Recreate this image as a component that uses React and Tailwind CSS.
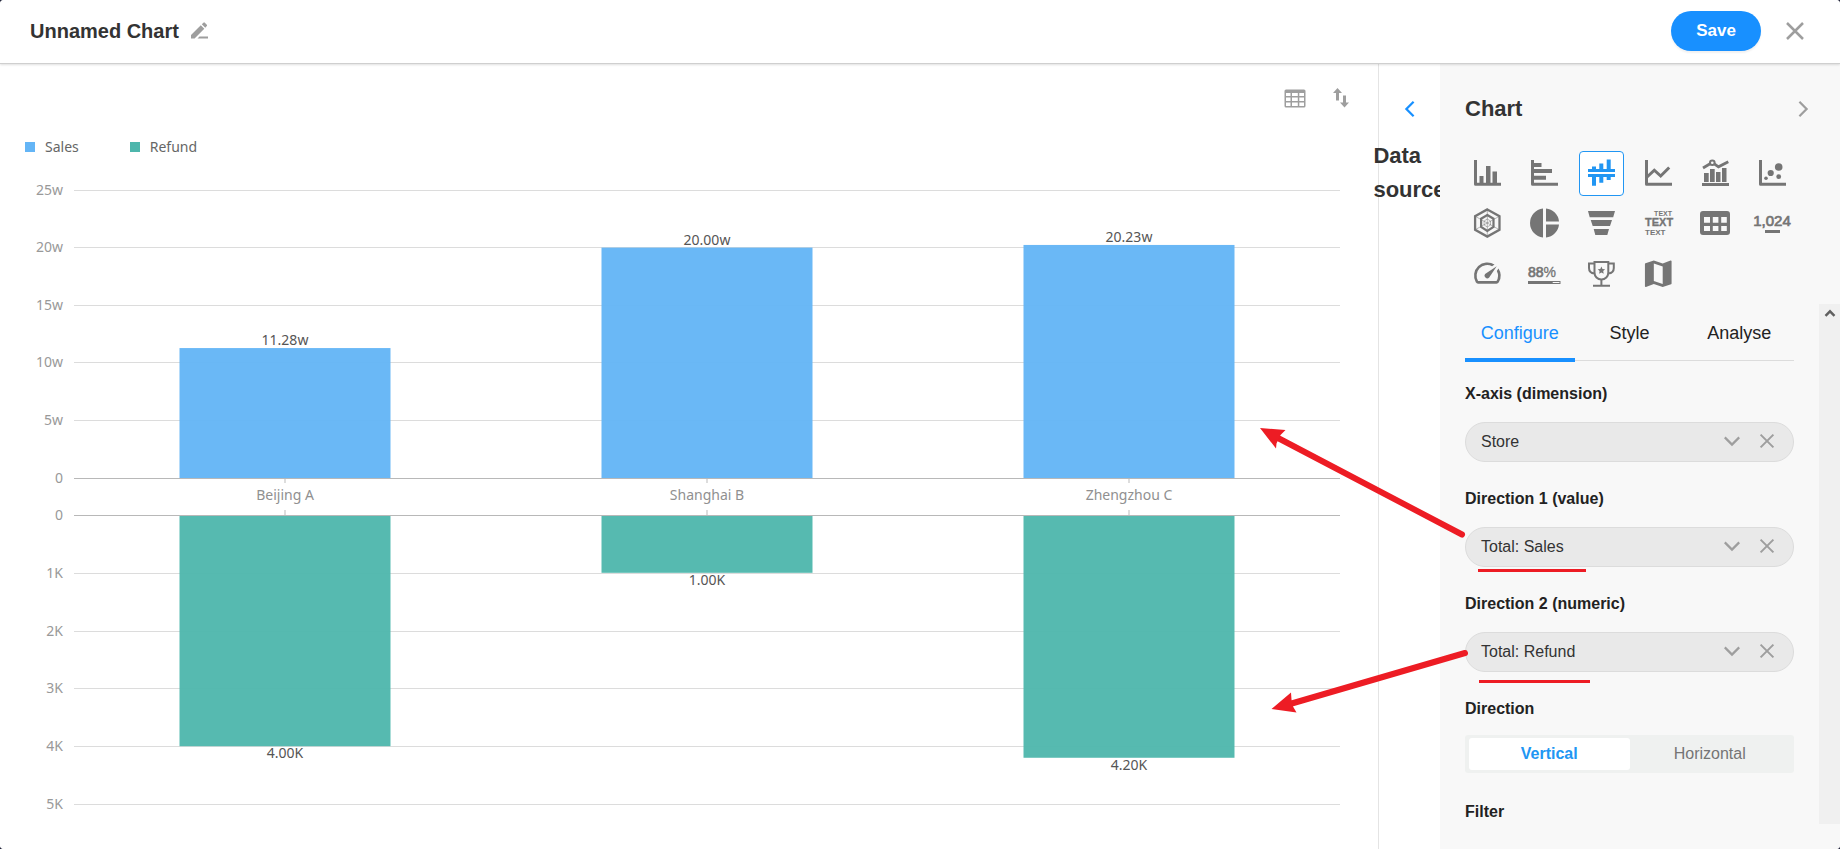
import React, { useState } from 'react';

const categories = [
  { name: 'Beijing A', sales: 11.28, refund: 4.0 },
  { name: 'Shanghai B', sales: 20.0, refund: 1.0 },
  { name: 'Zhengzhou C', sales: 20.23, refund: 4.2 },
];

const chartTypes = [
  {
    id: 'column',
    label: 'Column chart',
    icon: (
      <>
        <path d="M10.5 9v24.2H36" fill="none" stroke="currentColor" strokeWidth="3" strokeLinejoin="round" />
        <path d="M14.5 25h4v9h-4zM21 15h4.5v19H21zM27.5 20.5H32V34h-4.5z" />
      </>
    ),
  },
  {
    id: 'bar',
    label: 'Bar chart',
    icon: (
      <>
        <path d="M10.5 9v24.2H36" fill="none" stroke="currentColor" strokeWidth="3" strokeLinejoin="round" />
        <path d="M11 12h8.5v4H11zM11 18h19v4H11zM11 24.7h13v4H11z" />
      </>
    ),
  },
  {
    id: 'symmetric',
    label: 'Symmetric bar chart',
    icon: (
      <path d="M9 18h27v3H9zM9 23h27v3H9zM13 15.5h4V19h-4zM20.3 12.5h4V19h-4zM27.7 8.5h4V19h-4zM13 25h4v9.7h-4zM20.3 25h4v6.7h-4zM27.7 25h4v4h-4z" />
    ),
  },
  {
    id: 'line',
    label: 'Line chart',
    icon: (
      <g fill="none" stroke="currentColor" strokeWidth="3">
        <path d="M10.5 9v24.2H36" strokeLinejoin="round" />
        <path d="M10.5 26.5l7.8-7.3 6.4 5.8 8.5-8.5" />
      </g>
    ),
  },
  {
    id: 'combo',
    label: 'Dual axes chart',
    icon: (
      <>
        <path d="M9 32h27v3H9zM11 22h4.7v9H11zM17 18h4.7v13H17zM23 21h4.5v10H23zM29 17h4.5v14H29z" />
        <path d="M10 17l7.5-4.5M21.3 12.8l4.2 3L35.3 10.7" fill="none" stroke="currentColor" strokeWidth="2.8" />
        <circle cx="19.3" cy="11.7" r="2.3" fill="none" stroke="currentColor" strokeWidth="2" />
      </>
    ),
  },
  {
    id: 'scatter',
    label: 'Scatter chart',
    icon: (
      <>
        <path d="M10.5 9v24.2H36" fill="none" stroke="currentColor" strokeWidth="3" strokeLinejoin="round" />
        <circle cx="16" cy="27.3" r="1.8" />
        <circle cx="20.7" cy="22" r="3.1" />
        <circle cx="28.7" cy="16" r="3.8" />
        <circle cx="28.7" cy="25.7" r="2.4" />
      </>
    ),
  },
  {
    id: 'radar',
    label: 'Radar chart',
    icon: (
      <g fill="none" stroke="currentColor">
        <path d="M22.3 8.4l12.2 6.8v13.6l-12.2 6.8-12.2-6.8V15.2z" strokeWidth="2.3" />
        <path d="M22.3 14l6.2 3.7v8.2L22.3 30l-6.2-4.1v-8.2z" strokeWidth="2.2" />
        <path d="M10 15.2l24.5 13.6M34.5 15.2L10 28.8M22.3 8v28" strokeWidth="0.5" />
        <path d="M22.3 18l3.2 2v4l-3.2 2-3.2-2v-4z" strokeWidth="0.5" />
      </g>
    ),
  },
  {
    id: 'pie',
    label: 'Pie chart',
    icon: (
      <path d="M21 7.4v29.2a14.7 14.7 0 010-29.2zM24 7.4A14.7 14.7 0 0137 20.4H24zM24 23.4h13a14.7 14.7 0 01-13 13.2z" />
    ),
  },
  {
    id: 'funnel',
    label: 'Funnel chart',
    icon: <path d="M9 10h27l-1.8 6.3H10.7zM11.7 19H33l-2 6H13.7zM14.7 28H30l-1.7 6h-12z" />,
  },
  {
    id: 'wordcloud',
    label: 'Word cloud',
    icon: (
      <g fontFamily="Liberation Sans, sans-serif" fontWeight="700">
        <text x="36" y="15" fontSize="7" textAnchor="end">
          TEXT
        </text>
        <text x="9" y="25" fontSize="11" stroke="currentColor" strokeWidth="0.3">
          TEXT
        </text>
        <text x="9" y="34" fontSize="8">
          TEXT
        </text>
      </g>
    ),
  },
  {
    id: 'pivot',
    label: 'Pivot table',
    icon: (
      <path
        fillRule="evenodd"
        d="M10 10h24a3 3 0 013 3v18a3 3 0 01-3 3H10a3 3 0 01-3-3V13a3 3 0 013-3zM11 16v5.7h6V16zM19.8 16v5.7h5.6V16zM28.2 16v5.7h5.6V16zM11 25v5h6v-5zM19.8 25v5h5.6v-5zM28.2 25v5h5.6v-5z"
      />
    ),
  },
  {
    id: 'number',
    label: 'Number',
    icon: (
      <>
        <text
          x="22"
          y="25"
          fontSize="15"
          textAnchor="middle"
          stroke="currentColor"
          strokeWidth="0.7"
          fontFamily="Liberation Sans, sans-serif"
        >
          1,024
        </text>
        <path d="M15 29h15v3H15z" />
      </>
    ),
  },
  {
    id: 'gauge',
    label: 'Gauge',
    icon: (
      <path
        transform="translate(6.3 6) scale(1.333)"
        d="M20.38 8.57l-1.23 1.85a8 8 0 01-.22 7.58H5.07A8 8 0 0115.58 6.85l1.85-1.23A10 10 0 003.35 19a2 2 0 001.72 1h13.85a2 2 0 001.74-1 10 10 0 00-.27-10.44zM10.59 15.41a2 2 0 002.83 0l5.66-8.49-8.49 5.66a2 2 0 000 2.83z"
      />
    ),
  },
  {
    id: 'progress',
    label: 'Progress',
    icon: (
      <>
        <text
          x="6"
          y="25.5"
          fontSize="14"
          stroke="currentColor"
          strokeWidth="0.7"
          fontFamily="Liberation Sans, sans-serif"
        >
          88
          <tspan strokeWidth="0.3">%</tspan>
        </text>
        <path fillRule="evenodd" d="M6 30h32.5v3H6zM30.7 31v1h6.8v-1z" />
      </>
    ),
  },
  {
    id: 'ranking',
    label: 'Ranking',
    icon: (
      <>
        <g fill="none" stroke="currentColor" strokeWidth="2">
          <path d="M15.5 11h13.8v10.5c0 4-3 7-6.9 7s-6.9-3-6.9-7z" />
          <path d="M15.5 12.5H10v4.5c0 3.2 2 5.2 5.5 5.6M29.3 12.5h5.5v4.5c0 3.2-2 5.2-5.5 5.6" />
          <path d="M22.4 28.5v6M14 34.7h17" />
        </g>
        <path d="M22.4 15.5l1.1 2.5 2.6.3-1.9 1.8.5 2.7-2.3-1.4-2.3 1.4.5-2.7-1.9-1.8 2.6-.3z" />
      </>
    ),
  },
  {
    id: 'map',
    label: 'Map',
    icon: (
      <path
        transform="translate(4.5 5) scale(1.48)"
        d="M20.5 3l-.16.03L15 5.1 9 3 3.36 4.9c-.21.07-.36.25-.36.48V20.5c0 .28.22.5.5.5l.16-.03L9 18.9l6 2.1 5.64-1.9c.21-.07.36-.25.36-.48V3.5c0-.28-.22-.5-.5-.5zM15 19l-6-2.11V5l6 2.11V19z"
      />
    ),
  },
];

const tabs = ['Configure', 'Style', 'Analyse'];

const fields = [
  { label: 'X-axis (dimension)', value: 'Store' },
  { label: 'Direction 1 (value)', value: 'Total: Sales' },
  { label: 'Direction 2 (numeric)', value: 'Total: Refund' },
];

const PLOT = 288;
const TOP = 20; // y of the highest grid line
const ZERO_UP = TOP + PLOT;
const ZERO_DOWN = ZERO_UP + 37;
const PLOT_DOWN = 289;

const CROSS = 'M2 2l16 16M18 2L2 18';

const Stroke = ({ d, size, width = 2 }) => (
  <svg
    width={size}
    height={size}
    viewBox="0 0 20 20"
    fill="none"
    stroke="currentColor"
    strokeWidth={width}
    aria-hidden="true"
  >
    <path d={d} />
  </svg>
);

const Header = () => (
  <header className="relative z-10 flex h-16 shrink-0 items-center justify-between border-b border-[#cfcfcf] bg-white pr-[35px] pb-0.5 pl-[30px] shadow-[0_1px_2px_rgba(0,0,0,0.12)]">
    <div className="flex items-center gap-3">
      <h1 className="text-xl font-bold text-[#333]">Unnamed Chart</h1>
      <button aria-label="Rename chart" className="text-[#9e9e9e]">
        <svg width="18" height="17" viewBox="0 0 18 17" fill="currentColor" aria-hidden="true">
          <path d="M0 16.5v-3.6L9.8 3.2l3.5 3.5-9.7 9.8zM10.8 2.2L12.4.7a1 1 0 011.4 0l2 2a1 1 0 010 1.4l-1.5 1.6zM8.5 14.5H17v2H6.5z" />
        </svg>
      </button>
    </div>
    <div className="flex items-center gap-6">
      <button className="h-10 w-[90px] rounded-full bg-[#1890ff] text-[17px] font-bold text-white shadow-[0_2px_2px_rgba(0,0,0,0.06)]">
        Save
      </button>
      <button aria-label="Close" className="text-[#9e9e9e]">
        <Stroke d={CROSS} size={20} width={2.5} />
      </button>
    </div>
  </header>
);

const GridLine = ({ y, label, axis }) => (
  <g>
    <line x1="0" x2="100%" y1={y} y2={y} stroke={axis ? '#b8b8b8' : '#dcdcdc'} shapeRendering="crispEdges" />
    <text x="-11" y={y} dy="5" textAnchor="end" fill="#999">
      {label}
    </text>
  </g>
);

const BidirectionalChart = () => (
  <div className="pr-[38px] pl-[74px]">
    <svg
      role="img"
      aria-label="Sales and refund by store"
      className="block h-[660px] w-full overflow-visible font-['Noto_Sans',sans-serif] text-sm"
    >
      {[25, 20, 15, 10, 5].map((v) => (
        <GridLine key={v} y={Math.floor(ZERO_UP - (v / 25) * PLOT)} label={`${v}w`} />
      ))}
      {[1, 2, 3, 4, 5].map((v) => (
        <GridLine key={v} y={Math.round(ZERO_DOWN + (v / 5) * PLOT_DOWN)} label={`${v}K`} />
      ))}
      {categories.map((c, i) => {
        const left = ((i + 0.25) / 3) * 100;
        const center = ((i + 0.5) / 3) * 100;
        const up = (c.sales / 25) * PLOT;
        const down = (c.refund / 5) * PLOT_DOWN;
        return (
          <g key={c.name}>
            <rect x={`${left}%`} y={ZERO_UP - up} width={`${50 / 3}%`} height={up} fill="#64b5f6" fillOpacity="0.96" />
            <rect x={`${left}%`} y={ZERO_DOWN} width={`${50 / 3}%`} height={down} fill="#4db6ac" fillOpacity="0.95" />
            <line x1={`${center}%`} x2={`${center}%`} y1={ZERO_UP} y2={ZERO_UP + 5} stroke="#bbb" />
            <line x1={`${center}%`} x2={`${center}%`} y1={ZERO_DOWN - 5} y2={ZERO_DOWN} stroke="#bbb" />
            <text x={`${center}%`} y={ZERO_UP - up - 3} textAnchor="middle" fill="#555">
              {c.sales.toFixed(2)}w
            </text>
            <text x={`${center}%`} y={ZERO_UP + 22} textAnchor="middle" fill="#909090">
              {c.name}
            </text>
            <text x={`${center}%`} y={ZERO_DOWN + down + 12} textAnchor="middle" fill="#555">
              {c.refund.toFixed(2)}K
            </text>
          </g>
        );
      })}
      <GridLine y={ZERO_UP} label="0" axis />
      <GridLine y={ZERO_DOWN} label="0" axis />
    </svg>
  </div>
);

const ChartArea = () => (
  <section className="min-w-0 flex-1 bg-white pt-[14px]">
    <div className="flex h-10 items-center justify-end gap-[26px] pr-7 text-[#9e9e9e]">
      <button aria-label="Show data table">
        <svg width="22" height="19" viewBox="0 0 22 19" fill="currentColor" aria-hidden="true">
          <path
            fillRule="evenodd"
            d="M2 .5h18a1.5 1.5 0 011.5 1.5v15a1.5 1.5 0 01-1.5 1.5H2A1.500 1.500 0 01.5 17V2A1.500 1.500 0 012 .5zM2 4v3h4.500V4zM8 4v3h5.800V4zM15.300 4v3H20V4zM2 8.500V12h4.500V8.500zM8 8.500V12h5.800V8.500zM15.300 8.500V12H20V8.500zM2 13.500V17h4.500v-3.500zM8 13.500V17h5.800v-3.500zM15.300 13.500V17H20v-3.500z"
          />
        </svg>
      </button>
      <button aria-label="Sort">
        <svg width="18" height="20" viewBox="0 0 18 20" fill="currentColor" aria-hidden="true">
          <path d="M5.500 0L10 5H7v7.500H4V5H1zM12.500 19.500L8 14.500h3V7.500h3v7h3z" />
        </svg>
      </button>
    </div>
    <ul className="mt-[17px] mb-[11px] flex h-6 items-center gap-[51px] pl-[25px] font-['Noto_Sans',sans-serif] text-sm text-[#666]">
      <li className="flex items-center gap-[10px]">
        <span className="size-[10px] bg-[#64b5f6]" />
        Sales
      </li>
      <li className="flex items-center gap-[10px]">
        <span className="size-[10px] bg-[#4db6ac]" />
        Refund
      </li>
    </ul>
    <BidirectionalChart />
  </section>
);

const DataSource = () => (
  <aside className="flex w-[62px] shrink-0 flex-col items-center border-l border-[#e4e4e4] bg-white pt-9">
    <button aria-label="Expand data source" className="text-[#1890ff]">
      <Stroke d="M14 2L6 10l8 8" size={18} width={2.5} />
    </button>
    <h2 className="mt-[21px] text-[22px] leading-[34px] font-bold text-[#333]">
      Data
      <br />
      source
    </h2>
  </aside>
);

const Field = ({ label, value }) => (
  <div className="mb-[25px]">
    <h3 className="mb-4 leading-6 font-bold text-[#222]">{label}</h3>
    <div className="flex h-10 items-center rounded-full border border-[#dcdcdc] bg-[#e9e9e9] pr-[18px] pl-[15px]">
      <span className="flex-1 text-[#333]">{value}</span>
      <div className="flex items-center gap-[18px] pb-0.5 text-[#9e9e9e]">
        <button aria-label={`${value} options`}>
          <Stroke d="M2 6l8 8 8-8" size={18} width={2.5} />
        </button>
        <button aria-label={`Remove ${value}`}>
          <Stroke d={CROSS} size={16} width={2.5} />
        </button>
      </div>
    </div>
  </div>
);

const ConfigPanel = () => {
  const [type, setType] = useState('symmetric');
  const [tab, setTab] = useState('Configure');
  const [direction, setDirection] = useState('Vertical');

  return (
    <aside className="relative flex w-[400px] shrink-0 flex-col bg-[#f8f8f8] pb-[25px]">
      <div className="flex items-center justify-between pt-7 pr-7 pl-[25px]">
        <h2 className="text-[22px] leading-[34px] font-bold text-[#333]">Chart</h2>
        <button aria-label="Collapse panel" className="text-[#9e9e9e]">
          <Stroke d="M6 2l8 8-8 8" size={18} width={2.5} />
        </button>
      </div>

      <div className="mt-[25px] grid grid-cols-[repeat(6,45px)] gap-x-3 gap-y-[5px] pl-[25px]">
        {chartTypes.map((t) => (
          <button
            key={t.id}
            aria-label={t.label}
            onClick={() => setType(t.id)}
            className={`size-[45px] rounded ${
              type === t.id ? 'bg-white text-[#2196f3] outline -outline-offset-1 outline-[#2196f3]' : 'text-[#757575]'
            }`}
          >
            <svg width="45" height="45" viewBox="0 0 45 45" fill="currentColor" aria-hidden="true">
              {t.icon}
            </svg>
          </button>
        ))}
      </div>

      <div className="mt-2 flex flex-1">
        <div className="min-w-0 flex-1 px-[25px]">
          <div role="tablist" className="grid h-[58px] grid-cols-3 text-lg">
            {tabs.map((t) => (
              <button
                key={t}
                role="tab"
                aria-selected={tab === t}
                onClick={() => setTab(t)}
                className={`flex items-center justify-center ${
                  tab === t
                    ? 'border-b-4 border-[#1890ff] pt-1 text-[#1890ff]'
                    : 'mb-px border-b border-[#dcdcdc] pt-0.5 text-[#222]'
                }`}
              >
                {t}
              </button>
            ))}
          </div>

          <div className="pt-5">
            {fields.map((f) => (
              <Field key={f.label} label={f.label} value={f.value} />
            ))}
            <h3 className="mb-[14px] leading-6 font-bold text-[#222]">Direction</h3>
            <div className="mb-[27px] flex h-[38px] rounded-[3px] bg-[#eff1f0] px-1 py-[3px]">
              {['Vertical', 'Horizontal'].map((d) => (
                <button
                  key={d}
                  aria-pressed={direction === d}
                  onClick={() => setDirection(d)}
                  className={`flex-1 rounded-[3px] ${
                    direction === d ? 'bg-white font-bold text-[#2196f3]' : 'text-[#757575]'
                  }`}
                >
                  {d}
                </button>
              ))}
            </div>
            <h3 className="leading-6 font-bold text-[#222]">Filter</h3>
          </div>
        </div>
        <div className="flex w-[21px] shrink-0 justify-center bg-[#f0f0f0] pt-1 text-[#606060]">
          <Stroke d="M2.5 13L10 5.5l7.5 7.5" size={12} width={4} />
        </div>
      </div>
    </aside>
  );
};

// Red marks that tie the two direction fields to their halves of the chart
const Annotations = () => (
  <svg
    width="600"
    height="300"
    viewBox="0 0 600 300"
    className="pointer-events-none absolute top-[336px] right-0 z-20 overflow-visible"
    fill="#ed1c24"
    aria-hidden="true"
  >
    <g fill="none" stroke="#ed1c24" strokeWidth="6" strokeLinecap="round">
      <path d="M222 134.5L38 38" />
      <path d="M225 253L50 304" />
    </g>
    <path d="M20 28l25.500 2-5 5-4 8.500-.500 5z" />
    <path d="M31.500 309L51 292.500l.500 7 1.500 7 3.500 6z" />
    <path d="M238 169h108v3H238zM239 280h111v3H239z" />
  </svg>
);

const App = () => (
  <div className="bg-[#23263c] font-['Liberation_Sans',Arial,sans-serif] text-base">
    <div className="flex min-h-screen flex-col overflow-hidden rounded-[4px] bg-white">
      <Header />
      <main className="relative flex flex-1">
        <ChartArea />
        <DataSource />
        <ConfigPanel />
        <Annotations />
      </main>
    </div>
  </div>
);

export default App;
